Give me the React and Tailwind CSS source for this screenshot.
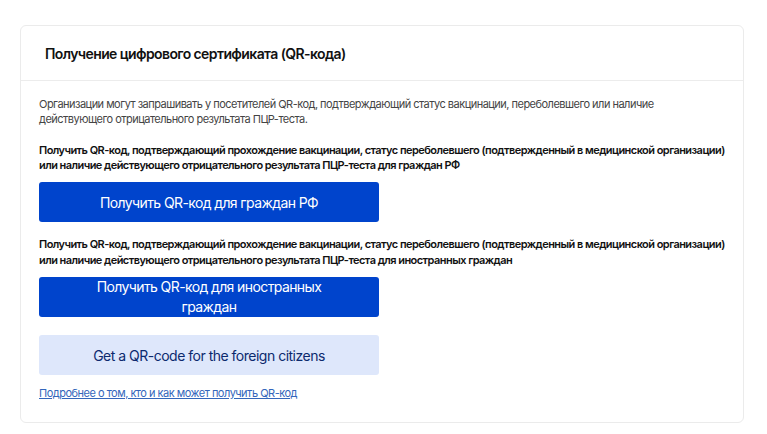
export default function App() {
    return (
        <div className="min-h-[434px] bg-white px-5 pt-[25px] pb-3 font-['Inter',sans-serif]">
            <div className="border border-[#ebebeb] rounded-md w-[724px]">
                <div className="h-[55px] flex items-center px-6 border-b border-[#ececec]">
                    <h2 className="text-[14px] font-semibold text-[#111] tracking-[-0.6px]">
                        Получение цифрового сертификата (QR-кода)
                    </h2>
                </div>

                <div className="px-[18px] pt-[16px] pb-[21px]">
                    <p className="text-[11px] leading-[15px] text-[#444] tracking-[-0.52px] whitespace-nowrap">
                        Организации могут запрашивать у посетителей QR-код, подтверждающий статус вакцинации, переболевшего или наличие
                        <br />
                        действующего отрицательного результата ПЦР-теста.
                    </p>

                    <p className="mt-[16px] text-[11px] leading-[15px] font-semibold text-[#111] tracking-[-0.55px] whitespace-nowrap">
                        Получить QR-код, подтверждающий прохождение вакцинации, статус переболевшего (подтвержденный в медицинской организации)
                        <br />
                        или наличие действующего отрицательного результата ПЦР-теста для граждан РФ
                    </p>
                    <button className="mt-[9px] w-[340px] h-[40px] rounded-[3px] bg-[#0044cc] text-white text-[14px] tracking-[-0.6px]">
                        Получить QR-код для граждан РФ
                    </button>

                    <p className="mt-[15px] text-[11px] leading-[15.5px] font-semibold text-[#111] tracking-[-0.55px] whitespace-nowrap">
                        Получить QR-код, подтверждающий прохождение вакцинации, статус переболевшего (подтвержденный в медицинской организации)
                        <br />
                        или наличие действующего отрицательного результата ПЦР-теста для иностранных граждан
                    </p>
                    <button className="mt-[9px] w-[340px] h-[40px] rounded-[3px] bg-[#0044cc] text-white text-[14px] leading-[20px] tracking-[-0.6px] flex flex-col items-center justify-center">
                        <span>Получить QR-код для иностранных</span>
                        <span>граждан</span>
                    </button>

                    <button className="mt-[18px] w-[340px] h-[40px] rounded-[3px] bg-[#dee7fb] text-[#0c2a6e] text-[14px] tracking-[-0.5px]">
                        Get a QR-code for the foreign citizens
                    </button>

                    <div className="mt-[8px] leading-[16px]">
                        <a href="#" className="text-[11px] leading-[16px] text-[#3366bb] underline tracking-[-0.5px]">
                            Подробнее о том, кто и как может получить QR-код
                        </a>
                    </div>
                </div>
            </div>
        </div>
    );
}
